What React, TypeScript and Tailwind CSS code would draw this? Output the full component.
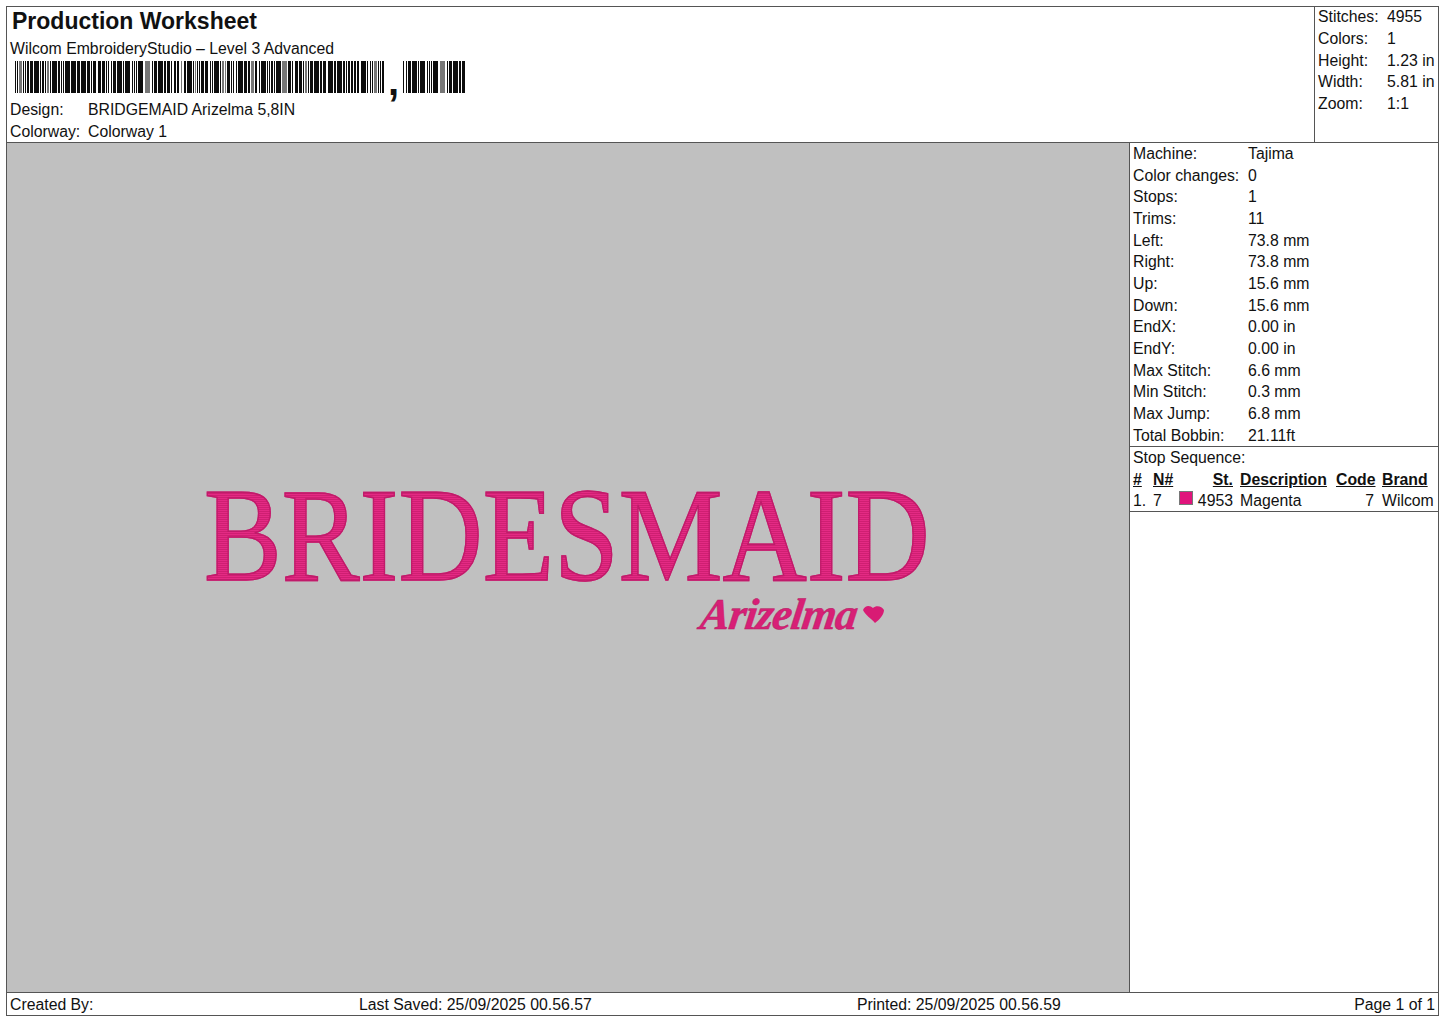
const sans = "font-['Liberation_Sans',Arial,sans-serif]";

const stats = [
  ["Stitches:", "4955"],
  ["Colors:", "1"],
  ["Height:", "1.23 in"],
  ["Width:", "5.81 in"],
  ["Zoom:", "1:1"],
];

const details = [
  ["Machine:", "Tajima"],
  ["Color changes:", "0"],
  ["Stops:", "1"],
  ["Trims:", "11"],
  ["Left:", "73.8 mm"],
  ["Right:", "73.8 mm"],
  ["Up:", "15.6 mm"],
  ["Down:", "15.6 mm"],
  ["EndX:", "0.00 in"],
  ["EndY:", "0.00 in"],
  ["Max Stitch:", "6.6 mm"],
  ["Min Stitch:", "0.3 mm"],
  ["Max Jump:", "6.8 mm"],
  ["Total Bobbin:", "21.11ft"],
];

// pseudo barcode, widths repeat with a fixed pattern
function makeBars(width: number, seed: number) {
  const bars: { x: number; w: number; grey: boolean }[] = [];
  let x = 0;
  let s = seed;
  while (x < width) {
    s = (s * 73 + 41) % 101;
    const w = s % 5 === 0 ? 5 : s % 4 === 0 ? 3 : s % 3 === 0 ? 2 : 1;
    const gap = s % 7 === 0 ? 2 : 1;
    const end = x + w > width ? width : x + w;
    bars.push({ x, w: end - x, grey: s % 11 === 0 });
    x = end + gap;
  }
  return bars;
}

function Barcode({ width, seed }: { width: number; seed: number }) {
  return (
    <svg width={width} height={32} className="block shrink-0">
      {makeBars(width, seed).map((b) => (
        <rect key={b.x} x={b.x} y={0} width={b.w} height={32} fill={b.grey ? "#777" : "#0c0c0c"} />
      ))}
    </svg>
  );
}

export default function App() {
  return (
    <div className={`w-[1445px] h-[1021px] bg-white pl-[6px] pt-[6px] text-[#111] text-[15.8px] leading-[21.67px] overflow-hidden ${sans}`}>
      <div className="w-[1433px] h-[1010px] border border-[#555] flex flex-col">
        {/* Header */}
        <div className="h-[136px] flex border-b border-[#555] shrink-0">
          <div className="flex-1 pl-[3px]">
            <div className="text-[23px] leading-[29px] font-bold pl-[2px]">Production Worksheet</div>
            <div className="mt-[2px]">Wilcom EmbroideryStudio – Level 3 Advanced</div>
            <div className="flex items-start pl-[5px] mt-[1px] h-[38px]">
              <Barcode width={370} seed={7} />
              <span className="font-bold text-[40px] leading-[32px] ml-[3px] mt-[4px]">,</span>
              <div className="ml-[4px]">
                <Barcode width={62} seed={19} />
              </div>
            </div>
            <div className="grid grid-cols-[78px_1fr] auto-rows-[22px]">
              <span>Design:</span>
              <span>BRIDGEMAID Arizelma 5,8IN</span>
              <span>Colorway:</span>
              <span>Colorway 1</span>
            </div>
          </div>
          <div className="w-[124px] border-l border-[#555] pl-[3px] -mt-[1px] grid grid-cols-[69px_1fr] auto-rows-[21.8px] content-start">
            {stats.map(([label, value]) => (
              <div key={label} className="contents">
                <span>{label}</span>
                <span>{value}</span>
              </div>
            ))}
          </div>
        </div>

        {/* Body */}
        <div className="flex-1 flex min-h-0">
          <div className="relative flex-1 bg-[#c0c0c0] overflow-hidden">
            <div className="absolute left-[197px] top-[342px] origin-left scale-x-[0.877] whitespace-nowrap font-['Liberation_Serif',serif] text-[133px] leading-[100px] text-transparent bg-clip-text bg-[repeating-linear-gradient(0deg,#e42a84_0px,#e42a84_1px,#cf1f72_1px,#cf1f72_2px)] [-webkit-text-stroke:1.5px_#c01b6a]">
              BRIDESMAID
            </div>
            <div className="absolute left-[694px] top-[447px] -skew-x-[8deg] whitespace-nowrap font-['Liberation_Serif',serif] italic font-bold text-[44px] leading-[50px] tracking-[-1px] text-[#d81f76] [-webkit-text-stroke:0.5px_#b51a63]">
              Arizelma
            </div>
            <svg className="absolute left-[855px] top-[461px]" width="23" height="20" viewBox="0 0 23 20">
              <path d="M1 6 C3 1 8 1 11 4 C14 1 20 2 22 6 C22 11 17 16 13 19 C10 15 3 11 1 6 Z" fill="#d81b74" />
            </svg>
          </div>
          <div className="w-[309px] border-l border-[#555] flex flex-col">
            <div className="border-b border-[#555] pl-[3px] grid grid-cols-[115px_1fr]">
              {details.map(([label, value]) => (
                <div key={label} className="contents">
                  <span>{label}</span>
                  <span>{value}</span>
                </div>
              ))}
            </div>
            <div className="border-b border-[#555] pl-[3px]">
              <div>Stop Sequence:</div>
              <div className="grid grid-cols-[20px_26px_54px_103px_40px_1fr] auto-rows-[21px] whitespace-nowrap">
                <span className="font-bold underline">#</span>
                <span className="font-bold underline">N#</span>
                <span className="font-bold underline text-right">St.</span>
                <span className="font-bold underline pl-[7px]">Description</span>
                <span className="font-bold underline">Code</span>
                <span className="font-bold underline pl-[6px]">Brand</span>
                <span>1.</span>
                <span>7</span>
                <span className="flex items-center justify-between">
                  <span className="w-[14px] h-[14px] -mt-[6px] bg-[#e0147c] border border-[#777]" />
                  <span>4953</span>
                </span>
                <span className="pl-[7px]">Magenta</span>
                <span className="text-right pr-[2px]">7</span>
                <span className="pl-[6px]">Wilcom</span>
              </div>
            </div>
          </div>
        </div>

        {/* Footer */}
        <div className="h-[23px] border-t border-[#555] shrink-0 flex items-center justify-between px-[3px] pt-[1px]">
          <span className="w-[349px]">Created By:</span>
          <span className="w-[498px]">Last Saved: 25/09/2025 00.56.57</span>
          <span className="flex-1">Printed: 25/09/2025 00.56.59</span>
          <span>Page 1 of 1</span>
        </div>
      </div>
    </div>
  );
}
